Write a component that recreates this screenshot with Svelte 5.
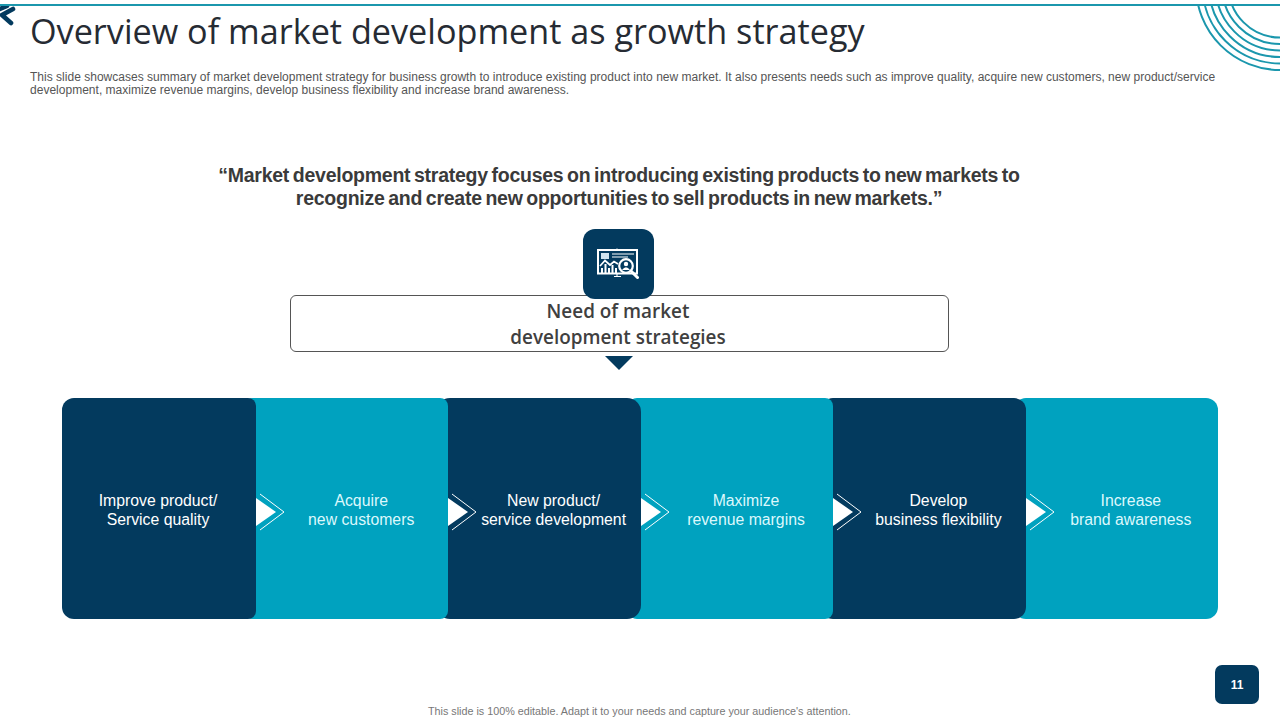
<script>
  const steps = [
    { lines: ['Improve product/', 'Service quality'] },
    { lines: ['Acquire', 'new customers'] },
    { lines: ['New product/', 'service development'] },
    { lines: ['Maximize', 'revenue margins'] },
    { lines: ['Develop', 'business flexibility'] },
    { lines: ['Increase', 'brand awareness'] }
  ];

  const arcs = [84, 77.5, 71, 64.5, 58, 51.5];
</script>

<div class="slide">
  <svg class="corner-logo" width="20" height="30" viewBox="0 0 20 30" aria-hidden="true">
    <path d="M13 9 L2 15 L11 23 M0 9 L7 6" fill="none" stroke="#033a5e" stroke-width="4.6" stroke-linecap="round" stroke-linejoin="round" />
  </svg>
  <svg class="corner-arcs" width="90" height="72" viewBox="1190 5 90 72" aria-hidden="true">
    {#each arcs as r}
      <circle cx="1280" cy="-14" {r} fill="none" stroke="#1b97ad" stroke-width="2" />
    {/each}
  </svg>

  <header class="head">
    <h1>Overview of market development as growth strategy</h1>
    <p class="intro">This slide showcases summary of market development strategy for business growth to introduce existing product into new market. It also presents needs such as improve quality, acquire new customers, new product/service development, maximize revenue margins, develop business flexibility and increase brand awareness.</p>
  </header>

  <p class="quote">“Market development strategy focuses on introducing existing products to new markets to<br />recognize and create new opportunities to sell products in new markets.”</p>

  <div class="need">
    <div class="need-icon">
      <svg width="42" height="32" viewBox="0 0 42 32" aria-hidden="true">
        <rect x="1" y="2" width="39" height="23.5" fill="none" stroke="#fff" stroke-width="2" />
        <rect x="4" y="5" width="8" height="6" fill="#cfe3ee" />
        <path d="M15 6 H37 M15 9 H31 M20 0.5 V2 M20 25 V28 M17 28.5 H24" stroke="#fff" stroke-width="1.1" fill="none" />
        <path d="M3 18 L8 12.5 L13 17 L17 13.5 L21 16" stroke="#fff" stroke-width="1.7" fill="none" />
        <path d="M5 25 V20 M8.5 25 V16 M12 25 V20 M15.5 25 V17 M19 25 V20" stroke="#fff" stroke-width="2" fill="none" />
        <circle cx="29" cy="18" r="6.8" fill="#033a5e" stroke="#fff" stroke-width="2.2" />
        <circle cx="29" cy="16" r="2.2" fill="#fff" />
        <path d="M25 22 Q29 16.5 33 22 Z" fill="#fff" />
        <path d="M34 23 L40.5 29.5" stroke="#fff" stroke-width="3" stroke-linecap="round" />
      </svg>
    </div>
    <div class="need-box">Need of market<br />development strategies</div>
    <svg class="need-arrow" width="28" height="14" viewBox="0 0 28 14" aria-hidden="true">
      <path d="M0 0 H28 L14 14 Z" fill="#033a5e" />
    </svg>
  </div>

  <div class="steps">
    {#each steps as step, i}
      <div class="step" class:teal={i % 2 === 1} style="z-index: {steps.length - i}">
        {#if i > 0}
          <svg class="step-arrow" width="30" height="38" viewBox="0 0 30 38" aria-hidden="true">
            <path d="M0 5 L20 19 L0 33 Z" fill="#fff" />
            <path d="M4 1 L28 19 L4 37" fill="none" stroke="#fff" stroke-width="1" />
          </svg>
        {/if}
        <span>{step.lines[0]}<br />{step.lines[1]}</span>
      </div>
    {/each}
  </div>

  <footer class="foot">
    <span class="foot-note">This slide is 100% editable. Adapt it to your needs and capture your audience's attention.</span>
    <span class="page-no">11</span>
  </footer>
</div>

<style>
  :global(body) {
    background: #fff;
  }

  .slide {
    position: relative;
    width: 1280px;
    height: 720px;
    overflow: hidden;
    display: flex;
    flex-direction: column;
    background: #fff;
    box-sizing: border-box;
    font-family: "Liberation Sans", Arial, sans-serif;
  }

  .slide::before {
    content: "";
    display: block;
    flex: none;
    height: 2px;
    margin-top: 4px;
    background: #1b97ad;
  }

  .corner-logo {
    position: absolute;
    top: 0;
    left: 0;
    clip-path: inset(6px 0 0 0);
  }

  .corner-arcs {
    position: absolute;
    top: 5px;
    right: 0;
  }

  .head {
    padding: 2px 60px 0 30px;
  }

  h1 {
    margin: 0;
    font-family: "Open Sans", sans-serif;
    font-weight: 400;
    font-size: 34.2px;
    line-height: 46px;
    color: #262b33;
  }

  .intro {
    margin: 17px 0 0;
    font-size: 12px;
    line-height: 13px;
    letter-spacing: 0.016px;
    color: #555;
  }

  .quote {
    margin: 67px 0 0;
    text-align: center;
    font-weight: 700;
    font-size: 19.5px;
    line-height: 23px;
    letter-spacing: -0.25px;
    word-spacing: -1.5px;
    color: #3a3a3a;
    padding-right: 42px;
  }

  .need {
    display: flex;
    flex-direction: column;
    align-items: center;
    margin-top: 19px;
    padding-right: 42px;
  }

  .need-icon {
    position: relative;
    z-index: 1;
    display: flex;
    align-items: center;
    justify-content: center;
    width: 71px;
    height: 70px;
    margin-left: -2px;
    border-radius: 12px;
    background: #033a5e;
  }

  .need-box {
    width: 659px;
    height: 57px;
    margin-top: -4px;
    box-sizing: border-box;
    border: 1px solid #555;
    border-radius: 6px;
    text-align: center;
    font-family: "Open Sans", sans-serif;
    font-weight: 600;
    font-size: 18.9px;
    line-height: 26px;
    color: #404040;
    padding: 2px 2px 0 0;
  }

  .need-arrow {
    display: block;
    margin-top: 4px;
  }

  .steps {
    display: flex;
    margin: 28px 62px 0;
    height: 221px;
  }

  .step {
    position: relative;
    box-sizing: border-box;
    flex: 1 1 0;
    display: flex;
    align-items: center;
    justify-content: center;
    margin-left: -12px;
    padding: 2px 0 0 30px;
    border-radius: 12px;
    background: #033a5e;
    color: #fff;
    font-size: 15.8px;
    line-height: 19px;
    text-align: center;
  }

  .step:first-child {
    flex: 0 0 194px;
    margin-left: 0;
    padding: 2px 2px 0 0;
    border-radius: 12px 8px 8px 12px;
  }

  .step:nth-child(2),
  .step:nth-child(4) {
    border-radius: 8px;
  }

  .step:nth-child(3) {
    border-radius: 14px;
  }

  .step.teal {
    background: #00a2bf;
    color: #dcf8fc;
  }

  .step-arrow {
    position: absolute;
    top: 95px;
    left: 12px;
  }

  .step:last-child {
    border-radius: 12px;
  }

  .foot {
    position: relative;
    flex: 1;
    display: flex;
    justify-content: center;
  }

  .foot-note {
    position: absolute;
    top: 86px;
    left: 428px;
    font-size: 10.78px;
    line-height: 12px;
    color: #777;
  }

  .page-no {
    position: absolute;
    top: 46px;
    right: 21px;
    width: 44px;
    height: 39px;
    display: flex;
    align-items: center;
    justify-content: center;
    border-radius: 7px;
    background: #033a5e;
    color: #fff;
    font-weight: 700;
    font-size: 12px;
  }
</style>
